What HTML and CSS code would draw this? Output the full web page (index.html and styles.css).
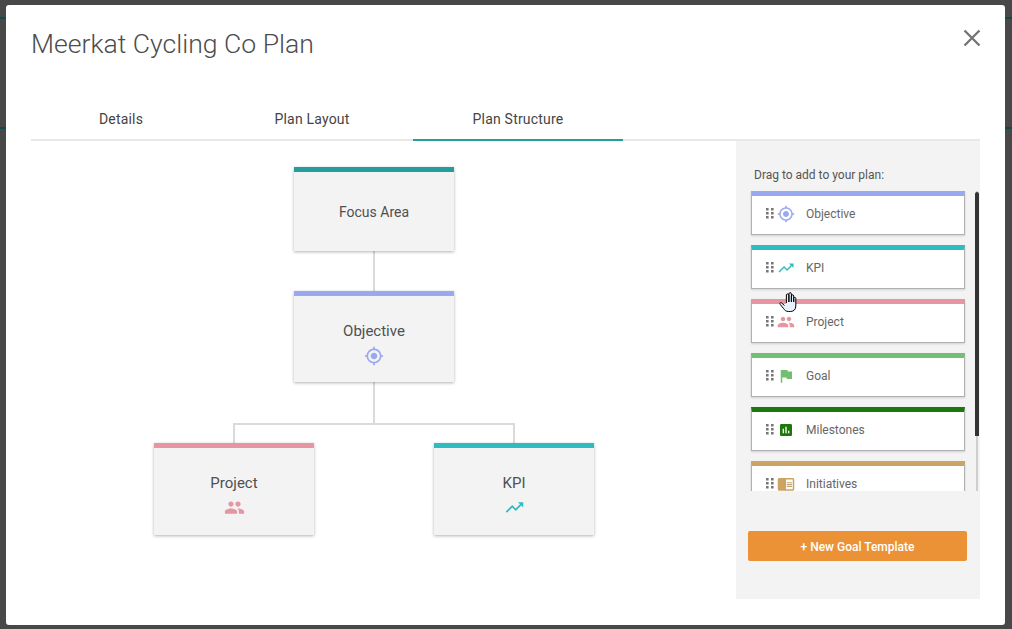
FILE: index.html
```html
<!DOCTYPE html>
<html lang="en">
<head>
<meta charset="utf-8">
<title>Meerkat Cycling Co Plan</title>
<link rel="stylesheet" href="styles.css">
</head>
<body>
<svg class="defs" width="0" height="0" aria-hidden="true">
  <symbol id="i-gps" viewBox="0 0 24 24"><path d="M12 8c-2.21 0-4 1.79-4 4s1.79 4 4 4 4-1.79 4-4-1.79-4-4-4zm8.94 3c-.46-4.17-3.77-7.48-7.94-7.94V1h-2v2.06C6.83 3.52 3.52 6.83 3.06 11H1v2h2.06c.46 4.17 3.77 7.48 7.94 7.94V23h2v-2.06c4.17-.46 7.48-3.77 7.94-7.94H23v-2h-2.06zM12 19c-3.87 0-7-3.13-7-7s3.13-7 7-7 7 3.13 7 7-3.13 7-7 7z"/></symbol>
  <symbol id="i-trend" viewBox="0 0 24 24"><path d="M16 6l2.29 2.29-4.88 4.88-4-4L2 16.59 3.41 18l6-6 4 4 6.3-6.29L22 12V6z"/></symbol>
  <symbol id="i-people" viewBox="0 0 24 24"><path d="M16 11c1.66 0 2.99-1.34 2.99-3S17.66 5 16 5c-1.66 0-3 1.34-3 3s1.34 3 3 3zm-8 0c1.66 0 2.99-1.34 2.99-3S9.66 5 8 5C6.34 5 5 6.34 5 8s1.34 3 3 3zm0 2c-2.33 0-7 1.17-7 3.5V19h14v-2.5c0-2.33-4.67-3.5-7-3.5zm8 0c-.29 0-.62.02-.97.05 1.16.84 1.97 1.97 1.97 3.45V19h6v-2.5c0-2.33-4.67-3.5-7-3.5z"/></symbol>
  <symbol id="i-flag" viewBox="0 0 24 24"><path d="M14.4 6L14 4H5v17h2v-7h5.6l.4 2h7V6z"/></symbol>
  <symbol id="i-chart" viewBox="0 0 24 24"><path d="M19 3H5c-1.1 0-2 .9-2 2v14c0 1.1.9 2 2 2h14c1.1 0 2-.9 2-2V5c0-1.1-.9-2-2-2zM9 17H7v-7h2v7zm4 0h-2V7h2v10zm4 0h-2v-4h2v4z"/></symbol>
  <symbol id="i-reader" viewBox="0 0 24 24"><path d="M13 12h7v1.5h-7zm0-2.5h7V11h-7zm0 5h7V16h-7zM21 4H3c-1.1 0-2 .9-2 2v13c0 1.1.9 2 2 2h18c1.1 0 2-.9 2-2V6c0-1.1-.9-2-2-2zm0 15h-9V6h9v13z"/></symbol>
  <symbol id="i-drag" viewBox="0 0 8 11"><path d="M0 0h2.6v2.6H0zM5 0h2.6v2.6H5zM0 4h2.6v2.6H0zM5 4h2.6v2.6H5zM0 8h2.6v2.6H0zM5 8h2.6v2.6H5z"/></symbol>
</svg>

<div class="backdrop">
  <main class="modal">
    <header class="modal-head">
      <h1 class="modal-title">Meerkat Cycling Co Plan</h1>
      <button class="close" type="button" aria-label="Close">
        <svg width="18" height="18" viewBox="0 0 18 18"><path d="M1.5 1.5l15 15M16.5 1.5l-15 15"/></svg>
      </button>
    </header>

    <nav class="tabs">
      <div class="tab tab-details">Details</div>
      <div class="tab tab-layout">Plan Layout</div>
      <div class="tab tab-structure is-active">Plan Structure</div>
    </nav>

    <div class="content">
      <section class="canvas">
        <svg class="links" width="705" height="458" viewBox="0 0 705 458">
          <path d="M343 110V150M343 241V283M203 302V283H483V302"/>
        </svg>

        <div class="node node-focus c-focus">
          <span class="node-label small">Focus Area</span>
        </div>
        <div class="node node-objective c-objective">
          <span class="node-label">Objective</span>
          <svg class="node-icon"><use href="#i-gps"/></svg>
        </div>
        <div class="node node-project c-project">
          <span class="node-label">Project</span>
          <svg class="node-icon wide"><use href="#i-people"/></svg>
        </div>
        <div class="node node-kpi c-kpi">
          <span class="node-label">KPI</span>
          <svg class="node-icon wide"><use href="#i-trend"/></svg>
        </div>
      </section>

      <aside class="side">
        <p class="side-title">Drag to add to your plan:</p>
        <div class="side-row">
          <div class="cards">
            <div class="card c-objective"><svg class="drag"><use href="#i-drag"/></svg><svg class="card-icon"><use href="#i-gps"/></svg><span>Objective</span></div>
            <div class="card c-kpi"><svg class="drag"><use href="#i-drag"/></svg><svg class="card-icon"><use href="#i-trend"/></svg><span>KPI</span></div>
            <div class="card c-project"><svg class="drag"><use href="#i-drag"/></svg><svg class="card-icon"><use href="#i-people"/></svg><span>Project</span></div>
            <div class="card c-goal"><svg class="drag"><use href="#i-drag"/></svg><svg class="card-icon"><use href="#i-flag"/></svg><span>Goal</span></div>
            <div class="card c-milestone"><svg class="drag"><use href="#i-drag"/></svg><svg class="card-icon narrow"><use href="#i-chart"/></svg><span>Milestones</span></div>
            <div class="card c-initiative"><svg class="drag"><use href="#i-drag"/></svg><svg class="card-icon"><use href="#i-reader"/></svg><span>Initiatives</span></div>
          </div>
          <div class="scrollbar"><div class="thumb"></div></div>
        </div>
        <button class="new-template" type="button">+ New Goal Template</button>
      </aside>
    </div>
  </main>
  <svg class="hand" width="18" height="20" viewBox="0 0 18 20" aria-hidden="true">
    <path d="M5.5 13.5L2.7 11C1.4 10 .2 11 1.2 12.4L4.6 16.6C5.6 18.2 7 19.5 9.5 19.5H11.5C14.7 19.5 16.8 17.5 16.8 14V6.5C16.8 5 14.8 5 14.7 6.5V10V4C14.7 2.4 12.5 2.4 12.4 4V10V1.9C12.4.2 9.9.2 9.9 1.9V10V3C9.9 1.5 7.4 1.5 7.4 3V11" fill="#e8f2fa" stroke="#000" stroke-width="1"/>
  </svg>
</div>
</body>
</html>
```

FILE: styles.css
```css
* { box-sizing: border-box; }

html, body {
  margin: 0;
  width: 1012px;
  height: 629px;
  overflow: hidden;
}

body {
  font-family: Roboto, "Liberation Sans", sans-serif;
  color: #4a4a4a;
}

.defs { position: absolute; }

.backdrop {
  position: relative;
  width: 1012px;
  height: 629px;
  padding: 5px 7px 4px 6px;
  background:
    linear-gradient(#0f4c49, #0f4c49) 0 17px / 100% 2px no-repeat,
    linear-gradient(#0f4c49, #0f4c49) 0 127px / 100% 2px no-repeat,
    #484848;
}

.modal {
  height: 620px;
  padding: 0 25px;
  background: #fff;
  border-radius: 3px;
}

.modal-head {
  display: flex;
  justify-content: space-between;
  align-items: flex-start;
  height: 95px;
}

.modal-title {
  margin: 20px 0 0;
  font-size: 26.6px;
  line-height: 38px;
  font-weight: 300;
  color: #4d4d4d;
}

.close {
  margin: 24px -1px 0 0;
  padding: 0;
  width: 18px;
  height: 18px;
  border: 0;
  background: none;
}

.close svg { display: block; }
.close path { fill: none; stroke: #757575; stroke-width: 2.4; }

.tabs {
  display: grid;
  grid-template-columns: 180px 202px 210px 1fr;
  height: 41px;
  border-bottom: 2px solid #e8e8e8;
}

.tab {
  height: 41px;
  padding-top: 11px;
  font-size: 14px;
  line-height: 16px;
  letter-spacing: 0.2px;
  text-align: center;
  color: #444;
}

.tab.is-active { border-bottom: 2px solid #229f9d; }

.content {
  display: flex;
  height: 458px;
}

.canvas {
  position: relative;
  flex: 0 0 705px;
}

.links {
  position: absolute;
  left: 0;
  top: 0;
}

.links path {
  fill: none;
  stroke: #dadada;
  stroke-width: 2;
}

.node {
  position: absolute;
  width: 160px;
  display: flex;
  flex-direction: column;
  align-items: center;
  justify-content: center;
  background: #f3f3f3;
  border-top: 5px solid var(--accent);
  box-shadow: 0 1px 3px rgba(0, 0, 0, .3);
}

.node-focus { left: 263px; top: 26px; height: 84px; }
.node-objective { left: 263px; top: 150px; height: 91px; padding-top: 10px; }
.node-project { left: 123px; top: 302px; height: 92px; padding-top: 8px; }
.node-kpi { left: 403px; top: 302px; height: 92px; padding-top: 8px; }

.node-label {
  font-size: 15px;
  line-height: 18px;
  color: #505050;
}

.node-label.small { font-size: 14px; }

.node-icon {
  width: 20px;
  height: 20px;
  margin-top: 6px;
  fill: var(--accent);
}

.node-icon.wide {
  width: 21px;
  height: 21px;
  margin: 5px 0 0;
}

.c-focus { --accent: #229f9d; }
.c-objective { --accent: #9aa8f0; }
.c-kpi { --accent: #2fbcc0; }
.c-project { --accent: #e695a1; }
.c-goal { --accent: #72bf72; }
.c-milestone { --accent: #1c780b; }
.c-initiative { --accent: #cba465; }

.side {
  flex: 0 0 244px;
  padding: 27px 0 0 12px;
  background: #f3f3f3;
}

.side-title {
  margin: 0 0 9px 6px;
  font-size: 12px;
  line-height: 14px;
  color: #555;
}

.side-row {
  display: flex;
  height: 300px;
}

.cards {
  width: 220px;
  padding: 0 3px;
  overflow: hidden;
  display: flex;
  flex-direction: column;
  gap: 10px;
}

.card {
  flex: 0 0 44px;
  display: flex;
  align-items: center;
  padding: 0 0 3px 14px;
  background: #fff;
  border: 1px solid #b0b0b0;
  border-top: 5px solid var(--accent);
  box-shadow: 0 1px 2px rgba(0, 0, 0, .15);
  font-size: 12px;
  color: #666;
}

.drag {
  flex: none;
  width: 8px;
  height: 11px;
  fill: #777;
}

.card-icon {
  flex: none;
  width: 18px;
  height: 18px;
  margin: 0 11px 0 3px;
  fill: var(--accent);
}

.card-icon.narrow {
  width: 16px;
  height: 16px;
  margin: 0 12px 0 4px;
}

.scrollbar {
  position: relative;
  width: 4px;
  margin-left: 7px;
  display: flex;
  justify-content: center;
}

.scrollbar::before {
  content: "";
  width: 2px;
  height: 100%;
  background: #cfcfcf;
}

.thumb {
  position: absolute;
  left: 0;
  top: 1px;
  width: 4px;
  height: 244px;
  border-radius: 2px 2px 0 0;
  background: #333;
}

.new-template {
  display: block;
  width: 219px;
  height: 30px;
  margin-top: 40px;
  border: 0;
  border-radius: 2px;
  background: #ec9236;
  color: #fff;
  font: 500 12px/30px Roboto, "Liberation Sans", sans-serif;
  text-align: center;
}

.hand {
  position: absolute;
  left: 779px;
  top: 292px;
}
```
